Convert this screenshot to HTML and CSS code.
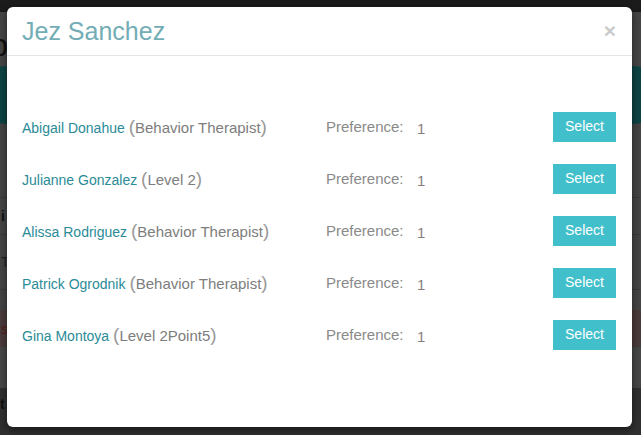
FILE: index.html
```html
<!DOCTYPE html>
<html>
<head>
<meta charset="utf-8">
<link rel="stylesheet" href="styles.css">
</head>
<body>
<div class="page">
  <div class="topbar"></div>
  <div class="hero">
    <div class="hero-side left">
      <span class="big-letter">b</span>
      <span class="avatar"></span>
      <span class="caption">e</span>
    </div>
    <div class="hero-side right">
      <span class="big-letter"></span>
      <span class="avatar"></span>
      <span class="caption">s</span>
    </div>
  </div>
  <div class="bg-row bold"><span>i</span></div>
  <div class="bg-row tall"><span>T</span></div>
  <div class="bg-gap"></div>
  <div class="bg-row red"><span>s</span></div>
  <div class="bg-fill"></div>
  <div class="bg-footer"><span>t</span></div>
</div>

<div class="modal">
  <div class="modal-header">
    <h4 class="modal-title">Jez Sanchez</h4>
    <span class="close">&times;</span>
  </div>
  <div class="modal-body">
    <div class="row">
      <div class="person"><a class="name">Abigail Donahue</a> <span class="paren">(</span><span class="role">Behavior Therapist</span><span class="paren">)</span></div>
      <div class="pref"><span class="pref-label">Preference:</span><span class="pref-value">1</span></div>
      <button class="btn">Select</button>
    </div>
    <div class="row">
      <div class="person"><a class="name">Julianne Gonzalez</a> <span class="paren">(</span><span class="role">Level 2</span><span class="paren">)</span></div>
      <div class="pref"><span class="pref-label">Preference:</span><span class="pref-value">1</span></div>
      <button class="btn">Select</button>
    </div>
    <div class="row">
      <div class="person"><a class="name">Alissa Rodriguez</a> <span class="paren">(</span><span class="role">Behavior Therapist</span><span class="paren">)</span></div>
      <div class="pref"><span class="pref-label">Preference:</span><span class="pref-value">1</span></div>
      <button class="btn">Select</button>
    </div>
    <div class="row">
      <div class="person"><a class="name">Patrick Ogrodnik</a> <span class="paren">(</span><span class="role">Behavior Therapist</span><span class="paren">)</span></div>
      <div class="pref"><span class="pref-label">Preference:</span><span class="pref-value">1</span></div>
      <button class="btn">Select</button>
    </div>
    <div class="row">
      <div class="person"><a class="name">Gina Montoya</a> <span class="paren">(</span><span class="role">Level 2Point5</span><span class="paren">)</span></div>
      <div class="pref"><span class="pref-label">Preference:</span><span class="pref-value">1</span></div>
      <button class="btn">Select</button>
    </div>
  </div>
</div>
</body>
</html>
```
FILE: styles.css
```css
* { box-sizing: border-box; }
html, body {
  margin: 0;
  padding: 0;
  width: 641px;
  height: 435px;
  overflow: hidden;
  font-family: "Liberation Sans", Arial, sans-serif;
}
body { background: #444; position: relative; }

/* dimmed page behind the modal */
.page {
  display: flex;
  flex-direction: column;
  height: 435px;
  background: #454545;
  color: #1a1a1a;
}
.topbar { height: 12px; background: #1b1b1b; flex: none; }
.hero {
  height: 186px;
  flex: none;
  display: flex;
  justify-content: space-between;
  border-bottom: 1px solid #3a3a3a;
}
.hero-side {
  display: flex;
  flex-direction: column;
  width: 30px;
}
.hero-side.left { margin-left: -22px; align-items: flex-end; }
.hero-side.right { margin-right: -22px; align-items: flex-start; }
.big-letter {
  height: 50px;
  font-size: 32px;
  line-height: 50px;
  color: #111;
  margin-top: 8px;
}
.avatar {
  width: 56px;
  height: 58px;
  border-radius: 50%;
  background: #0e4444;
  margin-top: -4px;
}
.hero-side.left .avatar { margin-right: -26px; }
.hero-side.right .avatar { margin-left: -28px; }
.caption {
  margin-top: 20px;
  font-size: 14px;
  color: #2a2a2a;
}
.hero-side.left .caption { margin-right: 14px; }
.hero-side.right .caption { margin-left: 24px; }

.bg-row {
  flex: none;
  height: 37px;
  border-bottom: 1px solid #3b3b3b;
  display: flex;
  align-items: center;
  font-size: 14px;
  padding-left: 1px;
}
.bg-row.bold { font-weight: bold; color: #111; }
.bg-row.tall { height: 55px; color: #222; }
.bg-gap { height: 20px; flex: none; }
.bg-row.red { height: 37px; background: #4a3b3b; color: #5a1a1a; border-bottom: none; }
.bg-fill { flex: 1; background: #474747; }
.bg-footer {
  height: 47px;
  flex: none;
  background: #303030;
  font-size: 14px;
  font-weight: bold;
  color: #111;
  display: flex;
  align-items: flex-start;
  padding-top: 8px;
}

/* modal */
.modal {
  position: absolute;
  top: 7px;
  left: 7px;
  width: 625px;
  height: 420px;
  background: #fff;
  border-radius: 6px;
  box-shadow: 0 3px 9px rgba(0, 0, 0, 0.5);
  display: flex;
  flex-direction: column;
}
.modal-header {
  height: 49px;
  flex: none;
  border-bottom: 1px solid #e5e5e5;
  display: flex;
  align-items: flex-start;
  justify-content: space-between;
  padding: 10px 15px 0 15px;
}
.modal-title {
  margin: 0;
  font-size: 25px;
  line-height: 29px;
  font-weight: normal;
  color: #73adb5;
}
.close {
  font-size: 21px;
  font-weight: bold;
  line-height: 21px;
  color: #cacaca;
  margin-top: 3px;
  margin-right: 1px;
}
.modal-body {
  padding: 56px 16px 0 15px;
  display: flex;
  flex-direction: column;
  gap: 22px;
}
.row {
  height: 30px;
  display: grid;
  grid-template-columns: 304px 1fr auto;
  align-items: center;
}
.person {
  font-size: 14px;
  white-space: nowrap;
  padding-bottom: 1px;
}
.name { color: #2b8b97; text-decoration: none; }
.paren { font-size: 19px; color: #9a9a9a; font-weight: 300; }
.role { font-size: 15px; color: #7d7d7d; }
.pref { display: flex; align-items: center; font-size: 15px; padding-bottom: 2px; }
.pref-label { color: #8a8a8a; width: 91px; }
.pref-value { color: #8a7d7d; font-size: 15px; padding-top: 5px; }
.btn {
  width: 63px;
  height: 30px;
  border: none;
  border-radius: 0;
  background: #41c0cb;
  color: #fff;
  font-family: "Liberation Sans", Arial, sans-serif;
  font-size: 14px;
  padding: 0;
  padding-bottom: 2px;
}
```
